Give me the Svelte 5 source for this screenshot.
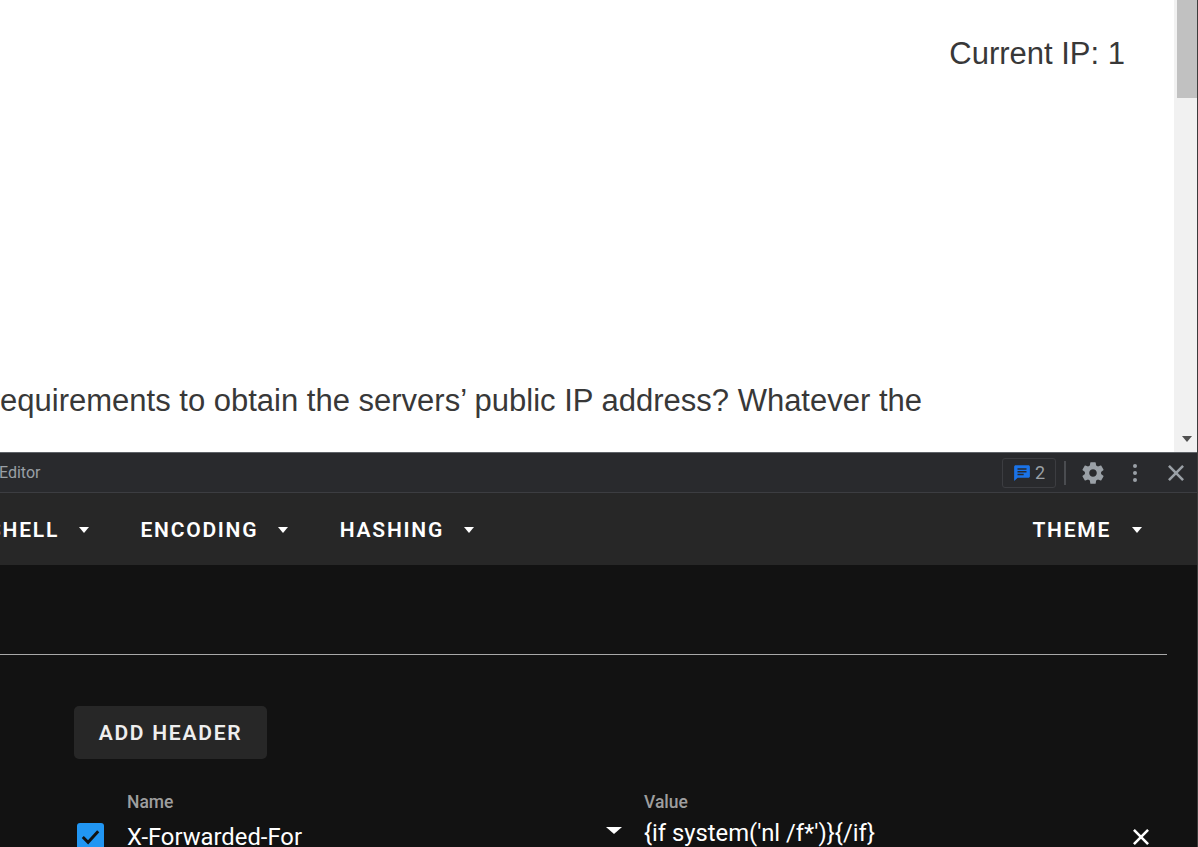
<script>
  const menus = ['SHELL', 'ENCODING', 'HASHING'];
</script>

<div class="window">
  <section class="page">
    <div class="page-content">
      <p class="ip-line">Current IP: 1</p>
      <p class="article-line">requirements to obtain the servers’ public IP address? Whatever the</p>
    </div>
    <div class="scrollbar">
      <div class="thumb"></div>
      <svg class="scroll-arrow" viewBox="0 0 10 6" aria-hidden="true"><path d="M0 0h10L5 6z" /></svg>
    </div>
  </section>

  <section class="devtools">
    <div class="dev-toolbar">
      <span class="tab-name">Editor</span>
      <div class="dev-actions">
        <div class="issues">
          <svg viewBox="0 0 16 16" aria-hidden="true">
            <path fill="#1a73e8" d="M2.4 1h11.2c.8 0 1.4.6 1.4 1.4v8.4c0 .8-.6 1.4-1.4 1.4H4.2L1 15V2.4C1 1.6 1.600 1 2.400 1z" />
            <path fill="#292a2d" d="M4 3.800h8v1.300H4zM4 6.300h8v1.300H4zM4 8.700h5.500V10H4z" />
          </svg>
          <span>2</span>
        </div>
        <div class="divider"></div>
        <svg class="gear" viewBox="0 0 24 24" aria-hidden="true">
          <path fill="#9aa0a6" d="M19.43 12.98c.04-.32.07-.64.07-.98s-.03-.66-.07-.98l2.110-1.650c.19-.15.24-.42.12-.64l-2-3.460c-.12-.22-.39-.3-.61-.22l-2.490 1c-.52-.4-1.080-.73-1.690-.98l-.38-2.650C14.460 2.180 14.250 2 14 2h-4c-.25 0-.46.18-.49.42l-.38 2.650c-.61.25-1.170.59-1.690.98l-2.490-1c-.23-.09-.49 0-.61.22l-2 3.460c-.13.22-.07.49.12.64l2.110 1.650c-.04.32-.07.65-.07.98s.03.66.07.98l-2.110 1.650c-.19.15-.24.42-.12.64l2 3.460c.12.22.39.3.61.22l2.490-1c.52.4 1.080.73 1.690.98l.38 2.650c.03.24.24.42.49.42h4c.25 0 .46-.18.49-.42l.38-2.650c.61-.25 1.170-.59 1.690-.98l2.490 1c.23.09.49 0 .61-.22l2-3.460c.12-.22.07-.49-.12-.64l-2.110-1.650zM12 15.500c-1.930 0-3.500-1.570-3.500-3.500s1.570-3.500 3.500-3.500 3.500 1.570 3.500 3.500-1.570 3.500-3.500 3.500z" />
        </svg>
        <svg class="dots" viewBox="0 0 6 20" aria-hidden="true">
          <circle cx="3" cy="3" r="2" /><circle cx="3" cy="10" r="2" /><circle cx="3" cy="17" r="2" />
        </svg>
        <svg class="close" viewBox="0 0 14 14" aria-hidden="true">
          <path d="M1.500 1.500l11 11M12.500 1.500l-11 11" />
        </svg>
      </div>
    </div>

    <nav class="menu-bar">
      <div class="menu-left">
        {#each menus as menu}
          <div class="menu-item">
            <span>{menu}</span>
            <i class="caret"></i>
          </div>
        {/each}
      </div>
      <div class="menu-item theme">
        <span>THEME</span>
        <i class="caret"></i>
      </div>
    </nav>

    <div class="panel">
      <div class="rule"></div>
      <button class="add-header">ADD HEADER</button>
      <div class="header-row">
        <div class="check">
          <svg viewBox="0 0 28 28" aria-hidden="true"><path d="M6 14.500l5.500 5.500L22 8.500" /></svg>
        </div>
        <div class="field name-field">
          <span class="field-label">Name</span>
          <div class="field-value">X-Forwarded-For</div>
        </div>
        <i class="caret select-caret"></i>
        <div class="field value-field">
          <span class="field-label">Value</span>
          <div class="field-value">&#123;if system('nl /f*')&#125;&#123;/if&#125;</div>
        </div>
        <svg class="remove" viewBox="0 0 14 14" aria-hidden="true">
          <path d="M1.500 1.500l11 11M12.500 1.500l-11 11" />
        </svg>
      </div>
    </div>
  </section>
</div>

<style>
  :global(body) {
    margin: 0;
    background: #121212;
  }

  .window {
    width: 1198px;
    height: 847px;
    box-sizing: border-box;
    overflow: hidden;
    display: flex;
    flex-direction: column;
    border-right: 1px solid #3c3c3c;
    font-family: Roboto, "Liberation Sans", sans-serif;
  }

  .page {
    height: 452px;
    flex-shrink: 0;
    display: flex;
    background: #fff;
  }

  .page-content {
    flex: 1;
    min-width: 0;
    display: flex;
    flex-direction: column;
    align-items: flex-end;
    font-family: "Liberation Sans", Arial, sans-serif;
    font-size: 31px;
    color: #383838;
    overflow: hidden;
  }

  .page-content p {
    margin: 0;
    white-space: nowrap;
    line-height: 36px;
  }

  .ip-line {
    padding: 36px 49px 0 0;
  }

  .article-line {
    padding: 311px 252px 0 0;
  }

  .scrollbar {
    width: 23px;
    box-sizing: border-box;
    background: #f1f1f1;
    padding-left: 3px;
    position: relative;
  }

  .thumb {
    height: 98px;
    background: #c1c1c1;
  }

  .scroll-arrow {
    position: absolute;
    left: 8px;
    bottom: 10px;
    width: 10px;
    height: 6px;
    fill: #505050;
  }

  .devtools {
    flex: 1;
    display: flex;
    flex-direction: column;
    min-height: 0;
    border-top: 1px solid #5f6368;
  }

  .dev-toolbar {
    height: 40px;
    flex-shrink: 0;
    box-sizing: border-box;
    display: flex;
    align-items: center;
    justify-content: space-between;
    background: #292a2d;
    border-bottom: 1px solid #3c3d41;
    color: #9aa0a6;
  }

  .tab-name {
    font-size: 16px;
    margin-left: -1px;
  }

  .dev-actions {
    display: flex;
    align-items: center;
    margin-right: 12px;
  }

  .issues {
    width: 54px;
    height: 30px;
    box-sizing: border-box;
    display: flex;
    align-items: center;
    gap: 4px;
    padding-left: 10px;
    border: 1px solid #3c3d41;
    border-radius: 3px;
    font-size: 18px;
  }

  .issues svg {
    width: 18px;
    height: 18px;
  }

  .divider {
    width: 2px;
    height: 24px;
    margin: 0 14px 0 8px;
    background: #4a4c50;
  }

  .gear {
    width: 26px;
    height: 26px;
  }

  .dots {
    width: 6px;
    height: 20px;
    margin-left: 26px;
    fill: #9aa0a6;
  }

  .close {
    width: 18px;
    height: 18px;
    margin-left: 29px;
    fill: none;
    stroke: #9aa0a6;
    stroke-width: 2;
  }

  .menu-bar {
    height: 72px;
    flex-shrink: 0;
    display: flex;
    align-items: center;
    justify-content: space-between;
    background: #272727;
    box-sizing: border-box;
    padding: 2px 55px 0 0;
    color: #fff;
    font-size: 21px;
    font-weight: 600;
    letter-spacing: 1.75px;
  }

  .menu-left {
    display: flex;
    gap: 51.5px;
    margin-left: -12px;
  }

  .menu-item {
    display: flex;
    align-items: center;
    gap: 20px;
  }

  .theme {
    gap: 21px;
  }

  .caret {
    display: block;
    width: 0;
    height: 0;
    border-left: 5.5px solid transparent;
    border-right: 5.500px solid transparent;
    border-top: 6px solid #fff;
  }

  .panel {
    flex: 1;
    background: #121212;
    color: #fff;
    min-height: 0;
  }

  .rule {
    height: 1px;
    width: 1167px;
    margin-top: 89px;
    background: #a8a8a8;
  }

  .add-header {
    display: block;
    width: 193px;
    height: 53px;
    margin: 51px 0 0 74px;
    padding: 0;
    border: none;
    border-radius: 5px;
    background: #272727;
    color: #eee;
    font-family: inherit;
    font-size: 21px;
    font-weight: 600;
    letter-spacing: 1.75px;
  }

  .header-row {
    display: flex;
    margin-top: 34px;
    height: 60px;
    position: relative;
  }

  .check {
    width: 27px;
    height: 27px;
    margin: 30px 0 0 77px;
    border-radius: 3px;
    background: #2196f3;
    flex-shrink: 0;
  }

  .check svg {
    display: block;
    width: 27px;
    height: 27px;
    fill: none;
    stroke: #121212;
    stroke-width: 3;
  }

  .field-label {
    display: block;
    font-size: 17.500px;
    line-height: 18px;
    color: #9e9e9e;
    font-weight: 500;
  }

  .field-value {
    font-size: 23.800px;
    line-height: 30px;
    white-space: nowrap;
  }

  .name-field {
    width: 479px;
    margin-left: 23px;
  }

  .name-field .field-value {
    margin-top: 11px;
  }

  .value-field {
    margin-left: 22px;
    width: 480px;
  }

  .value-field .field-value {
    margin-top: 7px;
  }

  .select-caret {
    margin-top: 34px;
    border-left-width: 8px;
    border-right-width: 8px;
    border-top-width: 7px;
  }

  .remove {
    width: 18px;
    height: 18px;
    margin-top: 35px;
    flex-shrink: 0;
    fill: none;
    stroke: #fff;
    stroke-width: 2;
    margin-left: 7.5px;
  }
</style>
